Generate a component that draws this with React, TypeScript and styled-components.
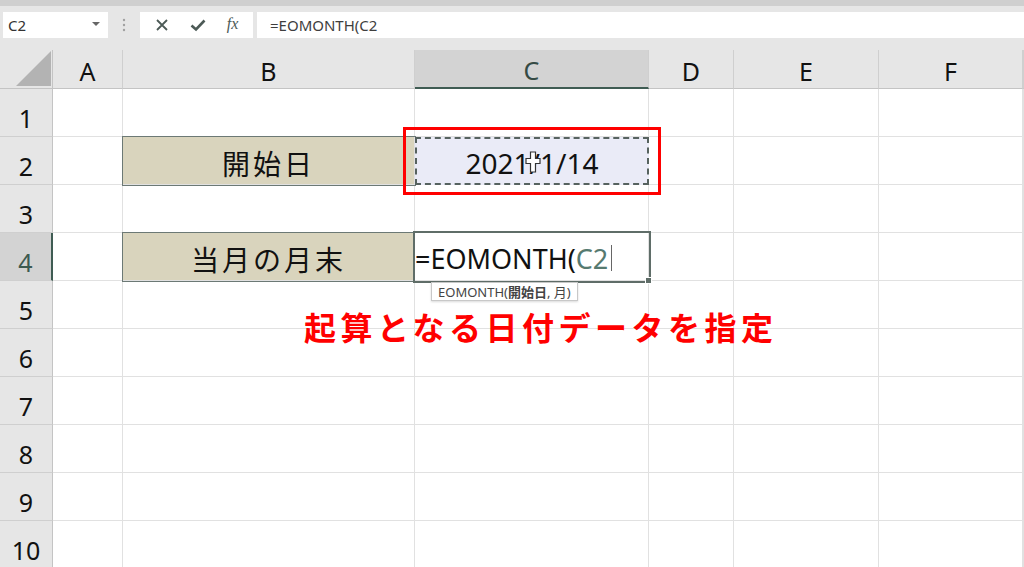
import React from 'react';
import styled, { createGlobalStyle, css } from 'styled-components';

const GlobalStyle = createGlobalStyle`
  html, body { margin: 0; padding: 0; background: #ffffff; }
  body { font-family: "Noto Sans", "Noto Sans CJK JP", sans-serif; overflow: hidden; }
`;

const FONT = `"Noto Sans", "Noto Sans CJK JP", sans-serif`;

const Page = styled.div`
  width: 1024px;
  height: 567px;
  overflow: hidden;
  background: #e6e6e6;
  display: flex;
  flex-direction: column;
`;

const TopStrip = styled.div`
  height: 6px;
  flex-shrink: 0;
  background: #cfcfcf;
`;

const Toolbar = styled.div`
  height: 44px;
  flex-shrink: 0;
  display: flex;
  align-items: flex-start;
  padding: 6px 0 0 3px;
  box-sizing: border-box;
`;

const NameBox = styled.div`
  width: 105px;
  height: 26px;
  background: #fff;
  display: flex;
  align-items: center;
  justify-content: space-between;
  padding: 0 8px 0 5px;
  box-sizing: border-box;
  font-family: ${FONT};
  font-size: 15px;
  color: #333;
`;

const Caret = styled.span`
  width: 0;
  height: 0;
  border-left: 4px solid transparent;
  border-right: 4px solid transparent;
  border-top: 4px solid #666;
  margin-top: -3px;
`;

const Grip = styled.div`
  width: 32px;
  height: 26px;
  display: flex;
  align-items: center;
  justify-content: center;
`;

const ButtonBox = styled.div`
  width: 113px;
  height: 26px;
  background: #fff;
  display: flex;
  align-items: center;
  justify-content: space-around;
  padding: 0 4px;
  box-sizing: border-box;
  color: #4c5a56;
`;

const Fx = styled.span`
  font-family: "Liberation Serif", serif;
  font-style: italic;
  font-size: 16px;
  color: #4c5a56;
  margin-top: -2px;
`;

const FormulaBox = styled.div`
  flex: 1;
  height: 26px;
  margin-left: 4px;
  background: #fff;
  display: flex;
  align-items: center;
  padding-left: 13px;
  font-family: ${FONT};
  font-size: 15px;
  color: #3e3e3e;
`;

const SheetWrap = styled.div`
  position: relative;
  flex: 1;
  min-height: 0;
  overflow: hidden;
`;

const Grid = styled.div`
  display: grid;
  grid-template-columns: 53px 70px 292px 234px 85px 145px 144px 1fr;
  grid-template-rows: 39px repeat(10, 48px);
  background: #fff;
`;

const Corner = styled.div`
  background: #e6e6e6;
  border-right: 1px solid #c4c4c4;
  border-bottom: 1px solid #c4c4c4;
  position: relative;
  &::after {
    content: '';
    position: absolute;
    right: 1px;
    bottom: 2px;
    width: 0;
    height: 0;
    border-left: 35px solid transparent;
    border-bottom: 35px solid #b3b3b3;
  }
`;

const ColHead = styled.div<{ $active?: boolean }>`
  background: ${p => (p.$active ? '#d3d3d3' : '#e6e6e6')};
  border-right: 1px solid #cfcfcf;
  border-bottom: ${p => (p.$active ? '2px solid #3f5c53' : '1px solid #c4c4c4')};
  display: flex;
  align-items: flex-end;
  justify-content: center;
  box-sizing: border-box;
  font-family: ${FONT};
  font-size: 25px;
  color: ${p => (p.$active ? '#354a44' : '#111')};
`;

const RowHead = styled.div<{ $active?: boolean }>`
  background: ${p => (p.$active ? '#d3d3d3' : '#e6e6e6')};
  border-right: ${p => (p.$active ? '2px solid #3f5c53' : '1px solid #c4c4c4')};
  border-bottom: 1px solid #cfcfcf;
  display: flex;
  align-items: flex-end;
  justify-content: center;
  padding-bottom: 1px;
  box-sizing: border-box;
  font-family: ${FONT};
  font-size: 25px;
  color: ${p => (p.$active ? '#3d5a51' : '#111')};
`;

type CellKind = 'plain' | 'label' | 'date' | 'edit';

const Cell = styled.div<{ $kind?: CellKind }>`
  border-right: 1px solid #e1e1e1;
  border-bottom: 1px solid #e1e1e1;
  box-sizing: border-box;
  display: flex;
  align-items: center;
  justify-content: center;
  font-family: ${FONT};
  color: #111;
  white-space: nowrap;
  position: relative;

  ${p =>
    p.$kind === 'label' &&
    css`
      background: #d9d4bd;
      box-shadow: 0 0 0 1px #6c7975;
      z-index: 1;
      font-size: 28px;
      letter-spacing: 3px;
      padding-top: 4px;
    `}

  ${p =>
    p.$kind === 'date' &&
    css`
      background: #eaebf7;
      border: none;
      outline: 2px dashed #56625f;
      outline-offset: -2px;
      z-index: 1;
      font-size: 28px;
      padding-top: 3px;
    `}

  ${p =>
    p.$kind === 'edit' &&
    css`
      background: #fff;
      box-shadow: 0 0 0 2px #5f6d68;
      z-index: 2;
      justify-content: flex-start;
      font-size: 27px;
      padding: 3px 0 0 0;
    `}
`;

const RefText = styled.span`
  color: #567a70;
`;

const TextCursor = styled.span`
  display: inline-block;
  width: 1px;
  height: 26px;
  background: #666;
  margin-left: 3px;
`;

const FillHandle = styled.span`
  position: absolute;
  right: -4px;
  bottom: -4px;
  width: 5px;
  height: 5px;
  background: #5f6d68;
  border: 1px solid #fff;
`;

const PlusCursor = styled.svg`
  position: absolute;
  left: 110px;
  top: 14px;
`;

const RedFrame = styled.div`
  position: absolute;
  left: 403px;
  top: 77px;
  width: 258px;
  height: 68px;
  border: 3px solid #ff0000;
  box-sizing: border-box;
  z-index: 3;
  pointer-events: none;
`;

const Tip = styled.div`
  position: absolute;
  left: 431px;
  top: 232px;
  height: 17px;
  padding: 0 6px;
  background: #fff;
  border: 1px solid #c8c8c8;
  box-shadow: 0 1px 2px rgba(0, 0, 0, 0.15);
  display: flex;
  align-items: center;
  font-family: ${FONT};
  font-size: 13px;
  color: #444;
  z-index: 3;
  b { font-weight: 700; }
`;

const Note = styled.div`
  position: absolute;
  left: 304px;
  top: 253px;
  font-family: "Noto Sans CJK JP", sans-serif;
  font-weight: 700;
  font-size: 32px;
  letter-spacing: 4.5px;
  color: #ff0000;
  z-index: 3;
`;

const COLS = ['A', 'B', 'C', 'D', 'E', 'F'];

const XIcon = () => (
  <svg width="14" height="14" viewBox="0 0 14 14">
    <path d="M2 2 L12 12 M12 2 L2 12" stroke="#4c5a56" strokeWidth="1.8" fill="none" />
  </svg>
);

const CheckIcon = () => (
  <svg width="16" height="14" viewBox="0 0 16 14">
    <path d="M1.5 7.5 L6 11.5 L14.5 2.5" stroke="#4c5a56" strokeWidth="2.6" fill="none" />
  </svg>
);

const renderCell = (row: number, col: number) => {
  const key = `${row}-${col}`;
  if (row === 2 && col === 1) return <Cell key={key} $kind="label">開始日</Cell>;
  if (row === 4 && col === 1) return <Cell key={key} $kind="label">当月の月末</Cell>;
  if (row === 2 && col === 2)
    return (
      <Cell key={key} $kind="date">
        2021/1/14
        <PlusCursor width="16" height="22" viewBox="0 0 16 22">
          <path
            d="M5.5 1 H10.5 V7.5 H15 V12.5 H10.5 V21 H5.5 V12.5 H1 V7.5 H5.5 Z"
            fill="#fff"
            stroke="#333"
            strokeWidth="1.2"
          />
        </PlusCursor>
      </Cell>
    );
  if (row === 4 && col === 2)
    return (
      <Cell key={key} $kind="edit">
        =EOMONTH(<RefText>C2</RefText>
        <TextCursor />
        <FillHandle />
      </Cell>
    );
  return <Cell key={key} />;
};

const App = () => {
  const rows = Array.from({ length: 10 }, (_, i) => i + 1);
  return (
    <>
      <GlobalStyle />
      <Page>
        <TopStrip />
        <Toolbar>
          <NameBox>
            C2
            <Caret />
          </NameBox>
          <Grip>
            <svg width="4" height="14" viewBox="0 0 4 14">
              <circle cx="2" cy="2" r="1.2" fill="#a0a0a0" />
              <circle cx="2" cy="7" r="1.2" fill="#a0a0a0" />
              <circle cx="2" cy="12" r="1.2" fill="#a0a0a0" />
            </svg>
          </Grip>
          <ButtonBox>
            <XIcon />
            <CheckIcon />
            <Fx>fx</Fx>
          </ButtonBox>
          <FormulaBox>=EOMONTH(C2</FormulaBox>
        </Toolbar>
        <SheetWrap>
          <Grid>
            <Corner />
            {COLS.map(c => (
              <ColHead key={c} $active={c === 'C'}>
                {c}
              </ColHead>
            ))}
            <ColHead />
            {rows.map(r => (
              <React.Fragment key={r}>
                <RowHead $active={r === 4}>{r}</RowHead>
                {Array.from({ length: 7 }, (_, c) => renderCell(r, c))}
              </React.Fragment>
            ))}
          </Grid>
          <RedFrame />
          <Tip>
            EOMONTH(<b>開始日</b>, 月)
          </Tip>
          <Note>起算となる日付データを指定</Note>
        </SheetWrap>
      </Page>
    </>
  );
};

export default App;
